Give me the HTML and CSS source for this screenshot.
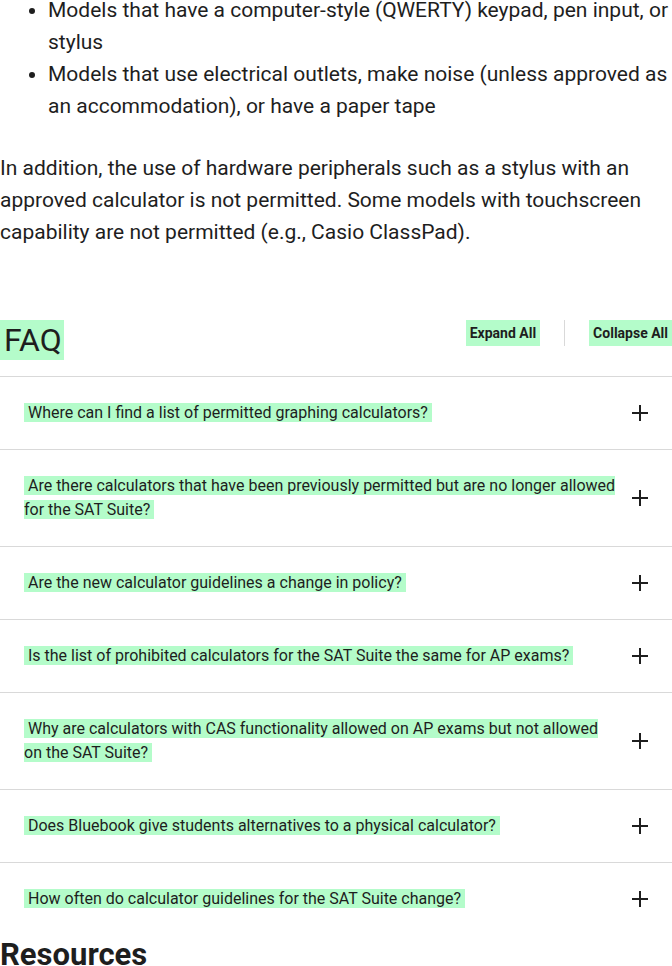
FILE: index.html
```html
<!DOCTYPE html>
<html lang="en">
<head>
    <meta charset="UTF-8">
    <meta name="viewport" content="width=device-width, initial-scale=1.0">
    <title>Calculator Policy - FAQ</title>
    <link rel="stylesheet" href="styles.css">
</head>
<body>
    <div class="conteudo">
        <!-- Lista de modelos proibidos -->
        <ul class="lista">
            <li>Models that have a computer-style (QWERTY) keypad, pen input, or stylus</li>
            <li>Models that use electrical outlets, make noise (unless approved as an accommodation), or have a paper tape</li>
        </ul>

        <p class="texto">In addition, the use of hardware peripherals such as a stylus with an approved calculator is not permitted. Some models with touchscreen capability are not permitted (e.g., Casio ClassPad).</p>

        <!-- FAQ -->
        <section class="faq">
            <div class="faq-topo">
                <h2><span class="marca">FAQ</span></h2>
                <div class="faq-botoes">
                    <button class="marca">Expand All</button>
                    <span class="divisor"></span>
                    <button class="marca">Collapse All</button>
                </div>
            </div>

            <div class="item">
                <span class="pergunta"><span class="marca">&nbsp;Where can I find a list of permitted graphing calculators?&nbsp;</span></span>
                <svg class="mais" viewBox="0 0 16 16"><path d="M8 0v16M0 8h16"/></svg>
            </div>
            <div class="item">
                <span class="pergunta"><span class="marca">&nbsp;Are there calculators that have been previously permitted but are no longer allowed for the SAT Suite?&nbsp;</span></span>
                <svg class="mais" viewBox="0 0 16 16"><path d="M8 0v16M0 8h16"/></svg>
            </div>
            <div class="item">
                <span class="pergunta"><span class="marca">&nbsp;Are the new calculator guidelines a change in policy?&nbsp;</span></span>
                <svg class="mais" viewBox="0 0 16 16"><path d="M8 0v16M0 8h16"/></svg>
            </div>
            <div class="item">
                <span class="pergunta"><span class="marca">&nbsp;Is the list of prohibited calculators for the SAT Suite the same for AP exams?&nbsp;</span></span>
                <svg class="mais" viewBox="0 0 16 16"><path d="M8 0v16M0 8h16"/></svg>
            </div>
            <div class="item">
                <span class="pergunta"><span class="marca">&nbsp;Why are calculators with CAS functionality allowed on AP exams but not allowed on the SAT Suite?&nbsp;</span></span>
                <svg class="mais" viewBox="0 0 16 16"><path d="M8 0v16M0 8h16"/></svg>
            </div>
            <div class="item">
                <span class="pergunta"><span class="marca">&nbsp;Does Bluebook give students alternatives to a physical calculator?&nbsp;</span></span>
                <svg class="mais" viewBox="0 0 16 16"><path d="M8 0v16M0 8h16"/></svg>
            </div>
            <div class="item">
                <span class="pergunta"><span class="marca">&nbsp;How often do calculator guidelines for the SAT Suite change?&nbsp;</span></span>
                <svg class="mais" viewBox="0 0 16 16"><path d="M8 0v16M0 8h16"/></svg>
            </div>
        </section>

        <h2 class="recursos">Resources</h2>
    </div>
</body>
</html>
```

FILE: styles.css
```css
/* Estilos gerais */
body {
    margin: 0;
    padding: 0;
    font-family: Roboto, "Liberation Sans", sans-serif;
    color: #1e1e1e;
    background-color: #fff;
    overflow: hidden;
}

.conteudo {
    margin-top: -6px;
}

/* Lista */
.lista {
    margin: 0 0 30px;
    padding-left: 48px;
    font-size: 21px;
    line-height: 32px;
}

.texto {
    margin: 0;
    font-size: 21px;
    line-height: 32px;
}

/* Destaque verde */
.marca {
    background-color: #b4fcca;
}

/* FAQ */
.faq {
    margin-top: 72px;
}

.faq-topo {
    display: flex;
    justify-content: space-between;
    align-items: flex-start;
    padding-bottom: 16px;
    border-bottom: 1px solid #d9d9d9;
}

.faq-topo h2 {
    margin: 0;
    font-size: 32px;
    font-weight: 400;
    line-height: 40px;
}

.faq-topo h2 .marca {
    display: inline-block;
    padding: 0 2px 0 4px;
}

.faq-botoes {
    display: flex;
    align-items: stretch;
    gap: 24px;
}

.faq-botoes button {
    border: none;
    padding: 0 4px;
    font-family: inherit;
    font-size: 14px;
    font-weight: 700;
    line-height: 26px;
    color: #1e1e1e;
    cursor: pointer;
}

.divisor {
    width: 1px;
    background-color: #d9d9d9;
}

/* Itens do acordeão */
.item {
    display: flex;
    align-items: center;
    gap: 16px;
    padding: 24px 24px;
    border-bottom: 1px solid #d9d9d9;
    font-size: 16px;
    line-height: 24px;
}

.item:last-child {
    border-bottom: none;
}

.pergunta {
    flex: 1;
}

.mais {
    width: 16px;
    height: 16px;
    flex-shrink: 0;
    stroke: #1e1e1e;
    stroke-width: 2;
    fill: none;
}

/* Resources */
.recursos {
    margin: 0;
    font-size: 31px;
    font-weight: 700;
    line-height: 40px;
}
```
